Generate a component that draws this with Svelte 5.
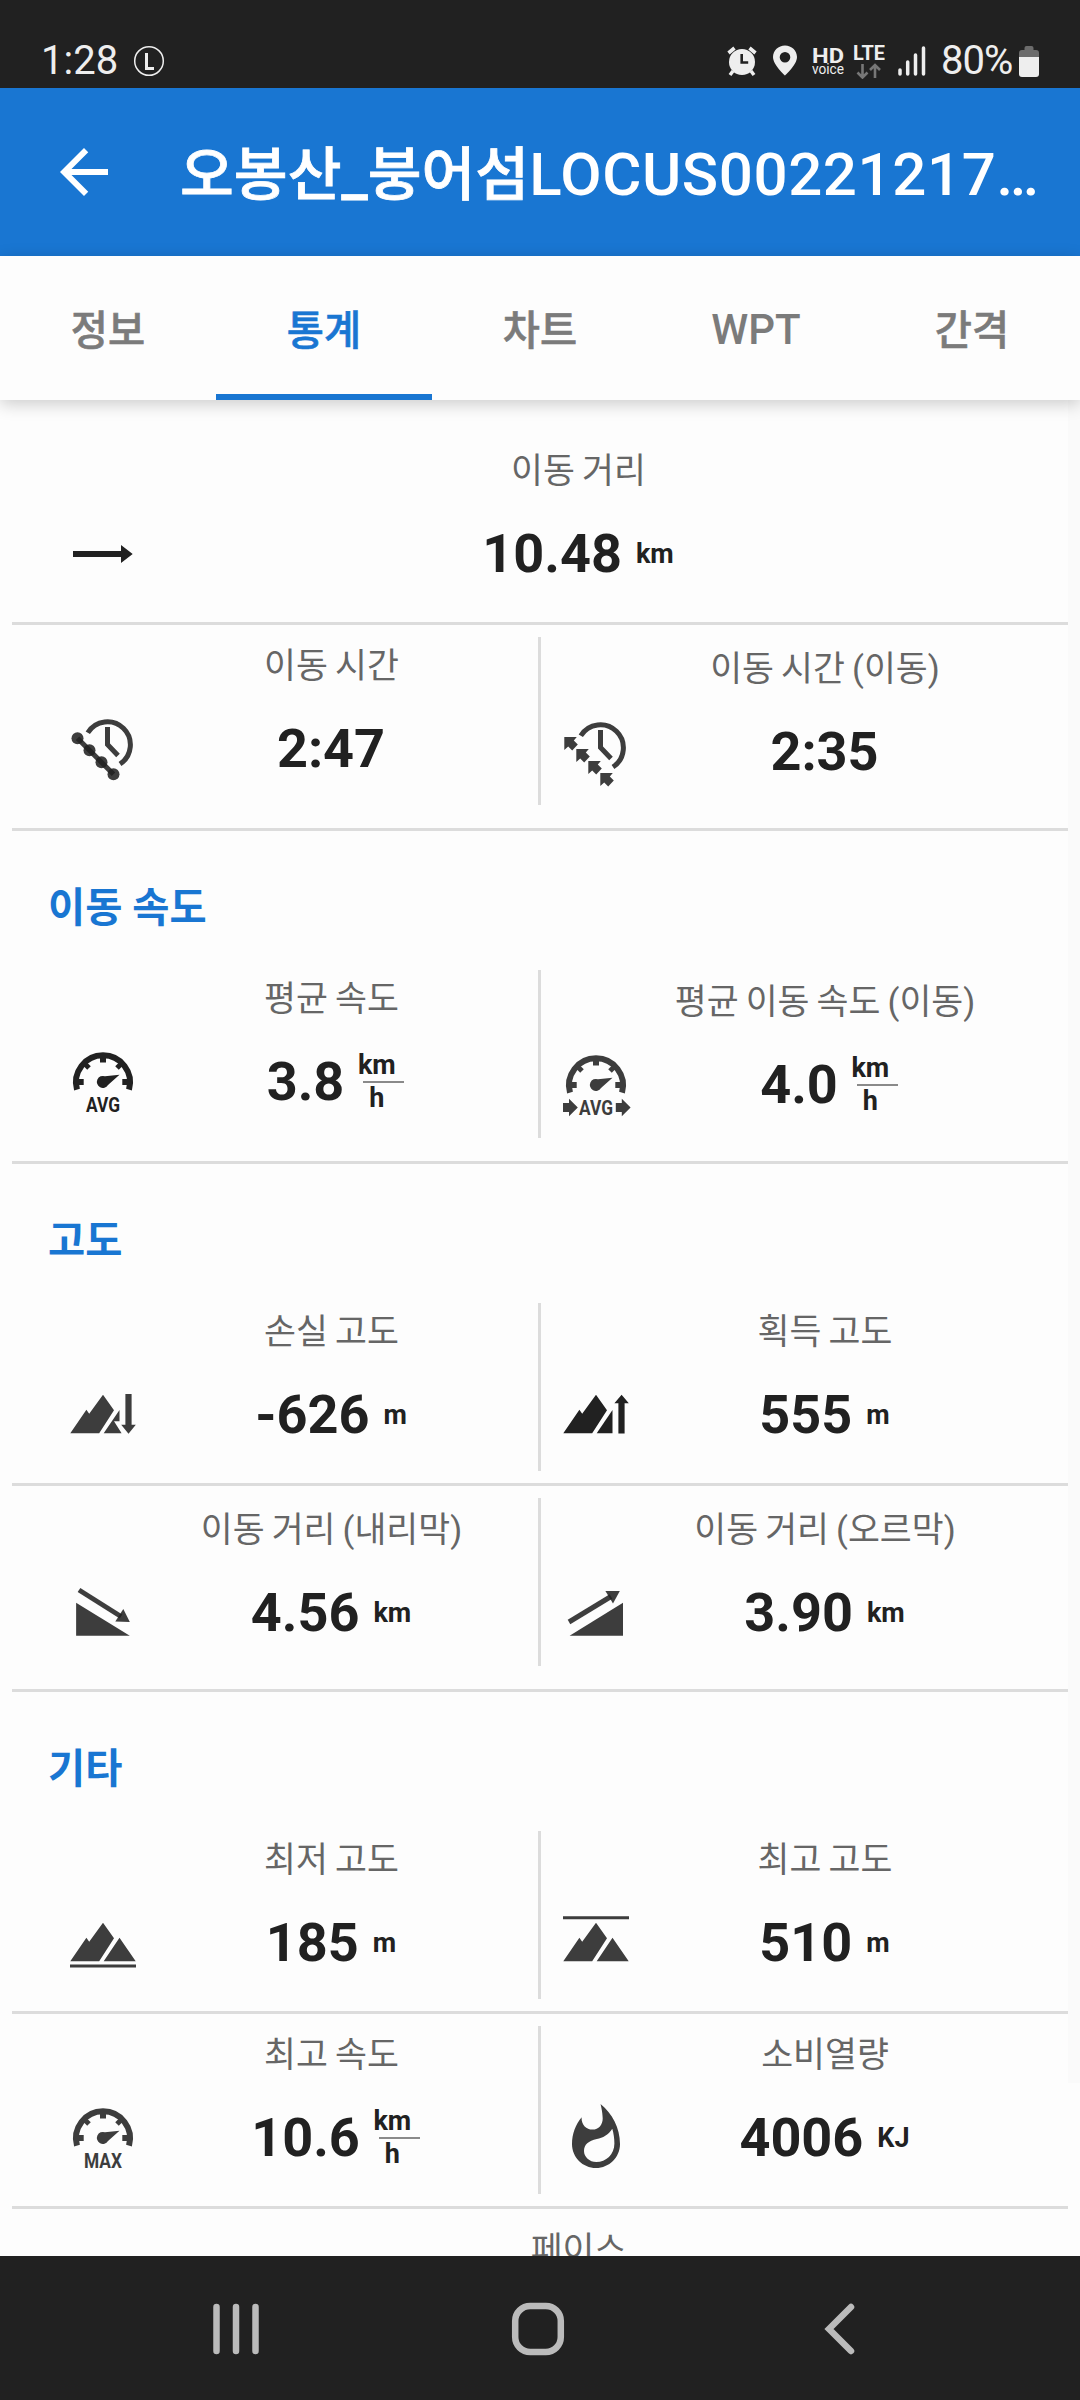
<script>
  const tabs = ['정보', '통계', '차트', 'WPT', '간격'];
  let activeTab = 1;

  const sections = [
    {
      title: '',
      rows: [
        [{ label: '이동 거리', value: '10.48', unit: 'km', icon: 'distance' }],
        [
          { label: '이동 시간', value: '2:47', icon: 'time' },
          { label: '이동 시간 (이동)', value: '2:35', icon: 'timeMoving' }
        ]
      ]
    },
    {
      title: '이동 속도',
      rows: [
        [
          { label: '평균 속도', value: '3.8', unit: 'km', per: 'h', icon: 'avg' },
          { label: '평균 이동 속도 (이동)', value: '4.0', unit: 'km', per: 'h', icon: 'avgMoving' }
        ]
      ]
    },
    {
      title: '고도',
      rows: [
        [
          { label: '손실 고도', value: '-626', unit: 'm', icon: 'loss' },
          { label: '획득 고도', value: '555', unit: 'm', icon: 'gain' }
        ],
        [
          { label: '이동 거리 (내리막)', value: '4.56', unit: 'km', icon: 'downhill' },
          { label: '이동 거리 (오르막)', value: '3.90', unit: 'km', icon: 'uphill' }
        ]
      ]
    },
    {
      title: '기타',
      rows: [
        [
          { label: '최저 고도', value: '185', unit: 'm', icon: 'lowest' },
          { label: '최고 고도', value: '510', unit: 'm', icon: 'highest' }
        ],
        [
          { label: '최고 속도', value: '10.6', unit: 'km', per: 'h', icon: 'max' },
          { label: '소비열량', value: '4006', unit: 'KJ', icon: 'energy' }
        ],
        [{ label: '페이스', value: '' }]
      ]
    }
  ];

  // these icons are drawn at full strength, the others slightly lighter
  const solidIcons = ['distance', 'avg', 'gain'];
</script>

{#snippet clock()}
  <path class="line" d="M20.8 19.7A23 23 0 1 1 53 51" />
  <path class="line" d="M40.5 14v17.5L51 42.5" />
{/snippet}

{#snippet gauge(text, width)}
  <path class="line thick" d="M10 43.6A27 27 0 1 1 62 43.6" />
  <path class="line thick" d="M36 9v7.5M9 36h7.7M63 36h-7.7" />
  <path class="line" d="M18 18l4 4M54 18l-4 4" />
  <path d="M52.5 28.7L38 30.3A6 6 0 1 0 41 39z" />
  <text x="36" y="65.8" text-anchor="middle" textLength={width} lengthAdjust="spacingAndGlyphs">{text}</text>
{/snippet}

{#snippet peak()}
  <path d="M3.3 54.3L19.4 30.7l2.8 4L36 15.7l11 15.6-14.8 23z" />
{/snippet}

{#snippet icon(name)}
  <svg class="icon" class:solid={solidIcons.includes(name)} viewBox="0 0 72 72">
    {#if name === 'distance'}
      <path d="M6 33h48v-6l11.7 9L54 45v-6H6z" />
    {:else if name === 'time'}
      {@render clock()}
      <g class="sheer">
        <path class="line" d="M10.5 25.3l36 36" />
        {#each [0, 1, 2, 3] as i}
          <circle cx={10.5 + i * 12} cy={25.3 + i * 12} r="6" />
        {/each}
      </g>
    {:else if name === 'timeMoving'}
      {@render clock()}
      {#each [0, 1, 2, 3] as i}
        <path transform="translate({i * 12} {i * 12})" d="M4.3 21h12.5l-3 3.6 4 4-5.6 5.9-4-4-3.9 3.6z" />
      {/each}
    {:else if name === 'avg'}
      {@render gauge('AVG', 34)}
    {:else if name === 'avgMoving'}
      {@render gauge('AVG', 34)}
      <path d="M3 54h6v-4.3l8.8 8.7L9 67.2V63H3zM55.8 54h6v-4.3l8.8 8.7-8.8 8.8V63h-6z" />
    {:else if name === 'max'}
      {@render gauge('MAX', 38)}
    {:else if name === 'loss'}
      {@render peak()}
      <path d="M36.7 54.3L52.5 31v11.3H47l7.6 12z" />
      <path d="M58.4 15h6.2v30.7h4.2l-7.3 9-7.3-9h4.2z" />
    {:else if name === 'gain'}
      {@render peak()}
      <path d="M36.7 54.3L52.5 31v23.3z" />
      <path d="M58.4 54.5V24.3h-4l7.2-8.6 7.2 8.6h-4.2v30.2z" />
    {:else if name === 'downhill'}
      <path d="M9.1 25.7v33h53.7z" />
      <g class="sheer">
        <path class="line" d="M12 13l42 26.5" />
        <path d="M56.3 32l6.5 13-14.5-.6z" />
      </g>
    {:else if name === 'uphill'}
      <path d="M9.6 58.7L63 25.7v33z" />
      <g class="sheer">
        <path class="line" d="M9 45l42-25.5" />
        <path d="M45.4 14h14.4L53 26.5z" />
      </g>
    {:else if name === 'lowest'}
      {@render peak()}
      <path d="M36.7 54.3l15.8-23.6 16.2 23.6zM3 57.5h66v3H3z" />
    {:else if name === 'highest'}
      {@render peak()}
      <path d="M36.7 54.3l15.8-23.6 16.2 23.6zM3 9.3h66v3H3z" />
    {:else if name === 'energy'}
      <path
        fill-rule="evenodd"
        d="M40.5 2S42.7 10 42.7 16.4c0 6.2-4 11.2-10.2 11.2-6.2 0-10.9-5-10.9-11.2l.1-1.1C15.6 22.5 12 31.9 12 42c0 13.3 10.7 24 24 24s24-10.7 24-24C60 25.8 52.2 11.4 40.5 2zM52.3 26.7C48 33.5 43 35.4 36.8 37 28.5 39 24 42.5 24 49c0 6 5.5 11 12.3 11 9.7 0 18.1-7.5 18.1-18.5 0-5-.8-10.3-2.1-14.8z"
      />
    {/if}
  </svg>
{/snippet}

<div class="screen">
  <div class="status">
    <span class="clock">1:28</span>
    <svg class="locus" width="32" height="32" viewBox="0 0 32 32">
      <circle cx="16" cy="16" r="14.3" fill="none" stroke="#eee" stroke-width="1.5" />
      <path d="M13.5 8v15.5h7.5" fill="none" stroke="#eee" stroke-width="3" />
    </svg>
    <div class="spacer"></div>
    <svg width="30" height="32" viewBox="0 0 30 32" fill="#eee">
      <circle cx="15" cy="17" r="13" />
      <path d="M1.5 8l6-5M28.5 8l-6-5" stroke="#eee" stroke-width="3.6" />
      <path d="M6 26l-3 4M24 26l3 4" stroke="#eee" stroke-width="3.5" />
      <path d="M14.7 9v8.5h6.5" fill="none" stroke="#212121" stroke-width="2.6" />
    </svg>
    <svg class="pin" width="24" height="31" viewBox="0 0 24 31">
      <path
        fill="#eee"
        fill-rule="evenodd"
        d="M12 .5C5.4.5 0 5.5 0 12c0 8 12 18.5 12 18.5S24 20 24 12C24 5.5 18.6.5 12 .5zM12 7a5.3 5.3 0 1 1 0 10.6A5.3 5.3 0 0 1 12 7z"
      />
    </svg>
    <svg class="hd" width="32" height="32" viewBox="0 0 32 32" fill="#eee">
      <text x="0" y="17.5" font-size="21" font-weight="700" textLength="32" lengthAdjust="spacingAndGlyphs">HD</text>
      <text x="0" y="29" font-size="14" textLength="32" lengthAdjust="spacingAndGlyphs">voice</text>
    </svg>
    <svg class="lte" width="32" height="34" viewBox="0 0 32 34">
      <text x="0" y="15" fill="#eee" font-size="21" font-weight="700" textLength="32" lengthAdjust="spacingAndGlyphs">LTE</text>
      <path d="M9.5 19v13M4.5 27.5l5 5 5-5M22 33V20.5M17 25l5-5 5 5" fill="none" stroke="#777" stroke-width="2.6" />
    </svg>
    <svg class="signal" width="28" height="30" viewBox="0 0 28 30">
      <path d="M2 24v4M9.7 16v12M17.5 9v19M25.5 2v26" stroke="#eee" stroke-width="3.5" stroke-linecap="round" />
    </svg>
    <span class="percent">80%</span>
    <svg class="battery" width="20" height="32" viewBox="0 0 20 32">
      <path d="M5.5 4V2q0-2 2-2h5q2 0 2 2v2h2.5q3 0 3 3v4.5H0V7q0-3 3-3z" fill="#6c6c6c" />
      <path d="M0 11h20v17q0 3-3 3H3q-3 0-3-3z" fill="#eee" />
    </svg>
  </div>

  <header>
    <svg width="72" height="72" viewBox="0 0 24 24">
      <path fill="#fff" d="M20 11H7.83l5.59-5.59L12 4l-8 8 8 8 1.41-1.41L7.83 13H20z" />
    </svg>
    <h1><span class="ko">오봉산_붕어섬</span><span class="latin">LOCUS00221217…</span></h1>
  </header>

  <nav class="tabs">
    {#each tabs as tab, i}
      <button class:active={i === activeTab} class:latin={tab === 'WPT'} on:click={() => (activeTab = i)}>{tab}</button>
    {/each}
  </nav>

  <main>
    <div class="scrollbar"></div>
    {#each sections as section}
      <section>
        {#if section.title}
          <h2>{section.title}</h2>
        {/if}
        {#each section.rows as row}
          <div class="row">
            {#each row as stat}
              <div class="cell" class:tall={stat.label.includes('(')}>
                {#if stat.icon}
                  {@render icon(stat.icon)}
                {:else}
                  <div class="icon"></div>
                {/if}
                <div class="stat">
                  <div class="label">{stat.label}</div>
                  <div class="value">
                    <span class="number">{stat.value}</span>
                    {#if stat.per}
                      <span class="unit fraction">
                        <span>{stat.unit}</span>
                        <span class="bar"></span>
                        <span>{stat.per}</span>
                      </span>
                    {:else if stat.unit}
                      <span class="unit">{stat.unit}</span>
                    {/if}
                  </div>
                </div>
              </div>
            {/each}
          </div>
        {/each}
      </section>
    {/each}
  </main>

  <footer>
    <svg width="48" height="54" viewBox="0 0 48 54">
      <path d="M4.5 5v44M24 5v44M43.5 5v44" />
    </svg>
    <svg width="54" height="54" viewBox="0 0 54 54">
      <rect x="4.2" y="4" width="45.6" height="46" rx="15" />
    </svg>
    <svg width="36" height="54" viewBox="0 0 36 54">
      <path d="M29 5L7 27l22 22" />
    </svg>
  </footer>
</div>

<style>
  :global(body) {
    margin: 0;
    background: #fdfdfd;
  }

  .screen {
    display: flex;
    flex-direction: column;
    width: 1080px;
    height: 2400px;
    overflow: hidden;
    background: #fdfdfd;
    color: #212121;
    font-family: Roboto, 'Noto Sans CJK KR', sans-serif;
  }

  .status {
    display: flex;
    align-items: flex-start;
    box-sizing: border-box;
    height: 88px;
    padding: 45px 41px 0 41px;
    background: #212121;
    color: #eee;
    font-size: 40px;
    line-height: 32px;
  }

  .clock {
    width: 92px;
  }

  .spacer {
    flex: 1;
  }

  .pin {
    margin-left: 16px;
  }

  .hd {
    margin-left: 15px;
  }

  .lte {
    margin-left: 9px;
  }

  .signal {
    margin: 1px 0 0 13px;
  }

  .percent {
    margin-left: 15px;
    width: 72px;
    letter-spacing: -1px;
  }

  .battery {
    margin: 1px 0 0 6px;
  }

  header {
    display: flex;
    align-items: center;
    height: 168px;
    padding-left: 48px;
    background: #1976d2;
    color: #fff;
  }

  h1 {
    margin: 6px 0 0 60px;
    font-size: 60px;
    font-weight: 500;
    line-height: 72px;
    white-space: nowrap;
  }

  h1 .ko {
    font-size: 58.5px;
    -webkit-text-stroke: 0.8px #fff;
  }

  h1 .latin {
    letter-spacing: 0.6px;
  }

  .tabs {
    display: flex;
    height: 144px;
    box-shadow: 0 4px 16px rgba(0, 0, 0, 0.2);
    background: #fdfdfd;
    z-index: 1;
  }

  .tabs button {
    flex: 1;
    padding: 4px 0 0;
    border: none;
    border-bottom: 6px solid transparent;
    background: none;
    color: #7b7b7b;
    font: 500 40.4px Roboto, 'Noto Sans CJK KR', sans-serif;
    -webkit-text-stroke: 0.6px currentColor;
  }

  .tabs button.latin {
    padding-top: 9px;
    font-size: 42px;
    -webkit-text-stroke: 0;
  }

  .tabs button.active {
    border-bottom-color: #1976d2;
    color: #1976d2;
  }

  main {
    position: relative;
    flex: 1;
    min-height: 0;
    overflow: hidden;
    padding: 30px 12px 0;
  }

  .scrollbar {
    position: absolute;
    top: 0;
    right: 0;
    width: 12px;
    height: 1683px;
    background: #fafafa;
  }

  h2 {
    margin: 0;
    padding: 54px 0 25px 36px;
    color: #1976d2;
    font-size: 40.4px;
    font-weight: 700;
    line-height: 48px;
  }

  .row {
    display: flex;
    padding: 12px 36px 12px 32px;
    border-bottom: 3px solid #dcdcdc;
  }

  section:not(:last-child) .row:last-child {
    padding-bottom: 23px;
  }

  .cell {
    display: flex;
    flex: 1;
    box-sizing: border-box;
    height: 168px;
    padding: 0 14px 0 23px;
  }

  .row .cell + .cell {
    padding-left: 19px;
    border-left: 3px solid #dcdcdc;
  }

  .cell:not(:only-child) {
    flex: none;
    width: 494px;
  }

  .cell.tall {
    padding-top: 3px;
  }

  .icon {
    flex: none;
    width: 72px;
    height: 72px;
    margin-top: 76px;
    fill: #3d3d3d;
    stroke: none;
    color: #3d3d3d;
  }

  .icon.solid {
    fill: #212121;
    color: #212121;
  }

  .icon .line {
    fill: none;
    stroke: currentColor;
    stroke-width: 5;
  }

  .icon .thick {
    stroke-width: 6;
  }

  .icon text {
    font-size: 19.5px;
    font-weight: 700;
  }

  .sheer {
    fill: rgba(33, 33, 33, 0.87);
    color: rgba(33, 33, 33, 0.87);
  }

  .stat {
    flex: 1;
    min-width: 0;
  }

  .label {
    height: 57px;
    color: #666;
    font-size: 34.7px;
    line-height: 59px;
    word-spacing: -1.5px;
    text-align: center;
    white-space: nowrap;
  }

  .value {
    display: flex;
    justify-content: center;
    align-items: center;
    gap: 14px;
    height: 110px;
    margin-right: 1px;
  }

  .number {
    font-size: 54px;
    font-weight: 700;
    line-height: 60px;
  }

  .unit {
    font-size: 27px;
    font-weight: 700;
    line-height: 32px;
  }

  .fraction {
    display: flex;
    flex-direction: column;
    align-items: center;
    width: 37px;
    line-height: 31px;
  }

  .bar {
    width: 41px;
    height: 2px;
    margin-left: 14px;
    background: #8a8a8a;
  }

  footer {
    display: grid;
    grid-template-columns: repeat(3, 302px);
    justify-items: center;
    align-items: center;
    box-sizing: border-box;
    height: 144px;
    padding: 2px 0 0 85px;
    background: #212121;
  }

  footer svg {
    fill: none;
    stroke: #bbb;
    stroke-width: 6.5;
    stroke-linecap: round;
  }
</style>
